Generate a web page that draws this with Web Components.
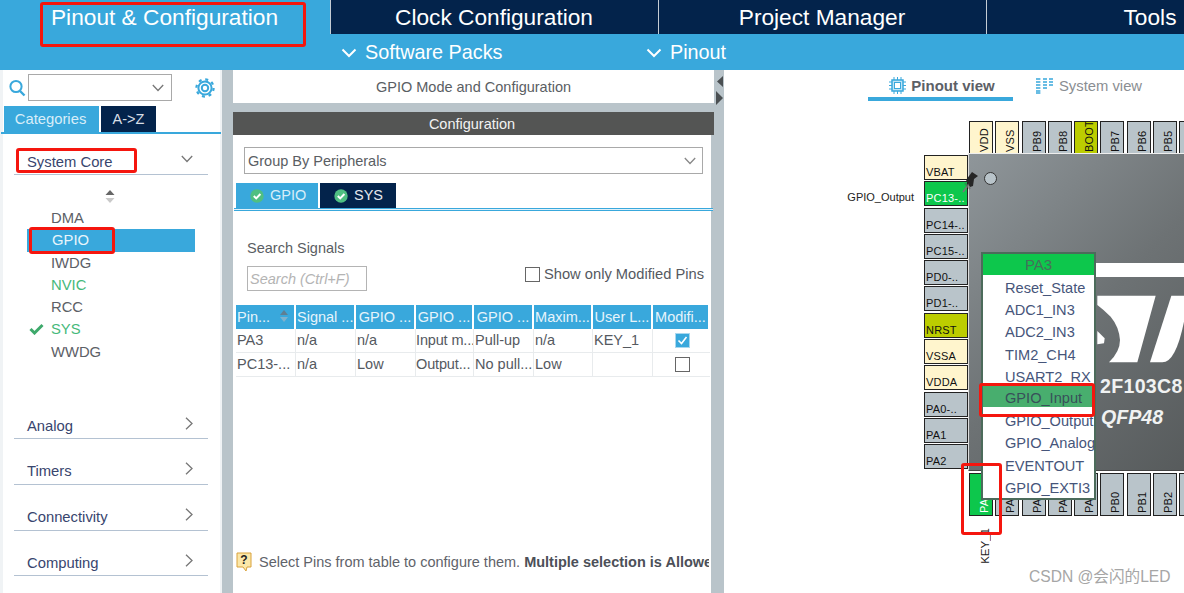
<!DOCTYPE html>
<html>
<head>
<meta charset="utf-8">
<title>Pinout & Configuration</title>
<style>
  html, body { margin: 0; height: 100%; overflow: hidden; background: #fff; }
  body { font-family: "Liberation Sans", Arial, sans-serif; color: #55595f; }
  .page { position: relative; width: 1184px; height: 593px; display: flex; flex-direction: column; overflow: hidden; }
  .work { display: flex; flex: 1; min-height: 0; }
</style>
</head>
<body>
<div class="page">
  <cube-topbar></cube-topbar>
  <div class="work">
    <cube-sidebar></cube-sidebar>
    <cube-gutter></cube-gutter>
    <cube-config></cube-config>
    <cube-gutter arrows></cube-gutter>
    <cube-chip></cube-chip>
  </div>
  <red-box style="left:40px;top:2px;width:266px;height:45px"></red-box>
  <red-box style="left:16px;top:148px;width:121px;height:25px"></red-box>
  <red-box style="left:29px;top:227px;width:86px;height:27px"></red-box>
  <red-box style="left:979px;top:383px;width:116px;height:34px"></red-box>
  <red-box style="left:961px;top:463px;width:41px;height:72px"></red-box>
  <water-mark>CSDN @会闪的LED</water-mark>
</div>

<script>
const CHEVRON_DOWN = '<svg width="16" height="10" viewBox="0 0 16 10"><path d="M1.5 1.5L8 8l6.5-6.5" fill="none" stroke="currentColor" stroke-width="2"/></svg>';

class CubeTopbar extends HTMLElement {
  constructor() {
    super();
    this.attachShadow({ mode: "open" }).innerHTML = `
    <style>
      :host { display: block; height: 70px; background: #39a8dc; color: #fff; overflow: hidden; flex: none; }
      .row { display: grid; grid-template-columns: 330px 328px 328px 328px; }
      .tab { height: 34px; line-height: 35px; text-align: center; font-size: 22.7px; background: #03234b; border-left: 1px solid #c4ccd4; box-sizing: border-box; padding-right: 1px; }
      .tab.on { background: #39a8dc; border-left: 0; }
      .subs { display: flex; height: 35px; padding-left: 341px; }
      .sub { display: flex; align-items: center; gap: 8px; font-size: 19.8px; padding-top: 2px; }
      .sub:first-child { width: 305px; }
      .sub svg { display: block; margin-top: 1px; }
    </style>
    <div class="row">
      <div class="tab on">Pinout &amp; Configuration</div>
      <div class="tab">Clock Configuration</div>
      <div class="tab">Project Manager</div>
      <div class="tab">Tools</div>
    </div>
    <div class="subs">
      <div class="sub">${CHEVRON_DOWN}<span>Software Packs</span></div>
      <div class="sub">${CHEVRON_DOWN}<span>Pinout</span></div>
    </div>`;
  }
}

class CubeGutter extends HTMLElement {
  constructor() {
    super();
    const arrows = this.hasAttribute("arrows");
    this.attachShadow({ mode: "open" }).innerHTML = `
    <style>
      :host { display: block; width: ${arrows ? 10 : 11}px; background: #b9c4ca; flex: none; }
      svg { display: block; margin: 6px 0 0 1px; }
    </style>
    ${arrows ? '<svg width="9" height="30" viewBox="0 0 9 30"><path d="M8 0v11L2 5.5z M1 15l7 7-7 7z" fill="#4a4f52"/></svg>' : ""}`;
  }
}

class CatRow extends HTMLElement {
  constructor() {
    super();
    const open = this.hasAttribute("open");
    this.attachShadow({ mode: "open" }).innerHTML = `
    <style>
      :host { display: flex; align-items: center; justify-content: space-between; box-sizing: border-box; height: 26px; margin: 0 12px 0 11px; padding: 0 15px 0 13px; border-bottom: 1px solid #b4c2d2; font-size: 14.8px; color: #38456e; }
      svg { display: block; color: #777; margin-top: -5px; }
    </style>
    <slot></slot>
    ${open
      ? '<svg width="12" height="8" viewBox="0 0 12 8"><path d="M.8 1L6 6.5 11.2 1" fill="none" stroke="currentColor" stroke-width="1.3"/></svg>'
      : '<svg width="8" height="13" viewBox="0 0 8 13"><path d="M1 .8L7 6.5 1 12.2" fill="none" stroke="currentColor" stroke-width="1.3"/></svg>'}`;
  }
}

class CubeSidebar extends HTMLElement {
  constructor() {
    super();
    this.attachShadow({ mode: "open" }).innerHTML = `
    <style>
      :host { display: block; width: 222px; flex: none; box-sizing: border-box; background: #fff; border-left: 3px solid #f0f3f5; border-right: 2px solid #f0f3f5; font-size: 14.5px; }
      .search { display: flex; align-items: center; height: 35px; padding-left: 6px; }
      .search .lens { display: block; }
      .combo { width: 144px; height: 27px; margin-left: 2px; box-sizing: border-box; border: 1px solid #a9a9a9; display: flex; align-items: center; justify-content: flex-end; padding-right: 7px; color: #777; }
      .gear { display: block; margin-left: 23px; }
      .tabs { display: flex; gap: 2px; height: 26px; margin: 1px -1px 0 -2px; padding-left: 3px; border-bottom: 2px solid #39a8dc; }
      .tabs div { line-height: 26px; text-align: center; }
      .cat { width: 95px; background: #39a8dc; color: #d8eef9; font-size: 14.8px; padding-right: 2px; box-sizing: border-box; }
      .az { width: 55px; background: #03234b; color: #d8dee6; }
      .first { margin-top: 15px; }
      .scroll { display: block; margin: 14px 0 0 101px; }
      ul { list-style: none; margin: 3px 0 0; padding: 0; }
      li { position: relative; height: 22.3px; line-height: 23px; padding-left: 48px; width: 120px; color: #5c6066; font-size: 14.8px; }
      li.sel { background: #39a8dc; color: #e8f5fb; margin-left: 24px; padding-left: 25px; width: 143px; }
      li.ok { color: #46b97a; }
      li svg { position: absolute; left: 26px; top: 5px; }
      .cats { margin-top: 50px; display: flex; flex-direction: column; gap: 19.8px; }
    </style>
    <div class="search">
      <svg class="lens" width="17" height="18" viewBox="0 0 17 18"><circle cx="7" cy="7.5" r="5.6" fill="none" stroke="#39a8dc" stroke-width="2"/><path d="M11 12l4.5 4.5" stroke="#39a8dc" stroke-width="2.4"/></svg>
      <div class="combo"><svg width="12" height="8" viewBox="0 0 12 8"><path d="M.8 1L6 6.5 11.2 1" fill="none" stroke="currentColor" stroke-width="1.3"/></svg></div>
      <svg class="gear" width="20" height="20" viewBox="0 0 20 20"><g fill="none" stroke="#39a8dc"><circle cx="10" cy="10" r="3.2" stroke-width="2"/><circle cx="10" cy="10" r="6.6" stroke-width="2"/><circle cx="10" cy="10" r="8.6" stroke-width="2.2" stroke-dasharray="3 3.75"/></g></svg>
    </div>
    <div class="tabs"><div class="cat">Categories</div><div class="az">A-&gt;Z</div></div>
    <cat-row class="first" open>System Core</cat-row>
    <svg class="scroll" width="12" height="15" viewBox="0 0 12 15"><path d="M6 1l4.5 5h-9z" fill="#666"/><path d="M6 14l4.5-5h-9z" fill="#c9c9c9"/></svg>
    <ul>
      <li>DMA</li>
      <li class="sel">GPIO</li>
      <li>IWDG</li>
      <li class="ok">NVIC</li>
      <li>RCC</li>
      <li class="ok"><svg width="15" height="12" viewBox="0 0 15 12"><path d="M1.5 6l4 4L13.5 2" fill="none" stroke="#3ea96b" stroke-width="3"/></svg>SYS</li>
      <li>WWDG</li>
    </ul>
    <div class="cats">
      <cat-row>Analog</cat-row>
      <cat-row>Timers</cat-row>
      <cat-row>Connectivity</cat-row>
      <cat-row>Computing</cat-row>
    </div>`;
  }
}

class PinTable extends HTMLElement {
  constructor() {
    super();
    const cols = "60px 60px 60px 58px 60px 59px 60px 57px";
    const head = ["Pin...", "Signal ...", "GPIO ...", "GPIO ...", "GPIO ...", "Maxim...", "User L...", "Modifi..."];
    const rows = [
      ["PA3", "n/a", "n/a", "Input m...", "Pull-up", "n/a", "KEY_1", true],
      ["PC13-...", "n/a", "Low", "Output...", "No pull...", "Low", "", false]
    ];
    const box = on => on
      ? '<svg width="15" height="15" viewBox="0 0 15 15"><rect x=".5" y=".5" width="14" height="14" fill="#39a8dc" stroke="#a9d8ef"/><path d="M3.5 7.5l3 3 5-6.5" fill="none" stroke="#fff" stroke-width="1.6"/></svg>'
      : '<svg width="15" height="15" viewBox="0 0 15 15"><rect x=".5" y=".5" width="14" height="14" fill="#fff" stroke="#666"/></svg>';
    const sortIcon = '<svg class="sort" width="10" height="14" viewBox="0 0 10 14"><path d="M5 1l4 5H1z" fill="#5f7f93"/><path d="M5 13l4-5H1z" fill="#7fb2cd"/></svg>';
    this.attachShadow({ mode: "open" }).innerHTML = `
    <style>
      :host { display: block; width: 474px; font-size: 14.5px; }
      .r { display: grid; grid-template-columns: ${cols}; }
      .h { height: 24px; }
      .h div { background: #39a8dc; color: #e6f4fb; margin-right: 2px; line-height: 25px; padding-left: 1px; white-space: nowrap; overflow: hidden; position: relative; }
      .h div.c { text-align: center; padding: 0; }
      .sort { position: absolute; right: 5px; top: 4px; }
      .b { height: 24px; border-bottom: 1px solid #e8ebed; box-sizing: border-box; }
      .b div { line-height: 22px; padding-left: 1px; border-right: 1px solid #e8ebed; white-space: nowrap; overflow: hidden; color: #55595f; }
      .b div:nth-child(4) { padding-left: 0; letter-spacing: -.15px; }
      .b div.m { display: flex; align-items: center; justify-content: center; border-right: 0; }
    </style>
    <div class="r h">${head.map((t, i) => `<div class="${i >= 2 ? "c" : ""}">${t}${i === 0 ? sortIcon : ""}</div>`).join("")}</div>
    ${rows.map(r => `<div class="r b">${r.map(v => typeof v === "boolean" ? `<div class="m">${box(v)}</div>` : `<div>${v}</div>`).join("")}</div>`).join("")}`;
  }
}

class CubeConfig extends HTMLElement {
  constructor() {
    super();
    const tick = '<svg width="14" height="14" viewBox="0 0 14 14"><circle cx="7" cy="7" r="6.7" fill="#4fbf82"/><path d="M3.8 7l2.4 2.4 4.2-4.4" fill="none" stroke="#fff" stroke-width="2"/></svg>';
    this.attachShadow({ mode: "open" }).innerHTML = `
    <style>
      :host { display: flex; flex-direction: column; width: 481px; flex: none; background: #b9c4ca; font-size: 14.5px; }
      .title { height: 33px; background: #fff; text-align: center; line-height: 34px; color: #5a5e63; flex: none; }
      .head { height: 23px; margin-top: 9px; background: #545554; color: #f2f2f2; text-align: center; line-height: 25px; flex: none; padding-right: 3px; }
      .body { flex: 1; background: #fff; margin-right: 3px; position: relative; }
      .select { display: flex; align-items: center; justify-content: space-between; box-sizing: border-box; height: 27px; width: 459px; margin: 12px 0 0 11px; border: 1px solid #a9a9a9; padding: 0 6px 0 3px; color: #5a5e63; }
      .select svg { color: #888; }
      .tabs { display: flex; gap: 2px; height: 25px; margin: 9px 0 0 3px; }
      .tabs div { display: flex; align-items: center; gap: 6px; padding-left: 14px; box-sizing: border-box; line-height: 25px; }
      .t1 { width: 82px; background: #39a8dc; color: #d8eef9; }
      .t2 { width: 76px; background: #03234b; color: #e3e8ee; }
      .rule { height: 1px; margin: 0 0 0 1px; width: 479px; border-top: 1px solid #39a8dc; border-bottom: 1px solid #39a8dc; background: #e0f1fa; }
      .search { display: flex; justify-content: space-between; margin: 28px 7px 0 14px; }
      .label { line-height: 18px; color: #5a5e63; }
      .input { width: 120px; height: 25px; box-sizing: border-box; border: 1px solid #b4b4b4; margin-top: 9px; line-height: 24px; padding-left: 2px; color: #b4b4b4; font-style: italic; }
      .only { display: flex; align-items: center; gap: 4px; margin-top: 26px; height: 18px; color: #55595f; font-size: 14.7px; }
      pin-table { margin: 14px 0 0 3px; }
      .hint { position: absolute; left: 3px; right: 2px; top: 417px; display: flex; align-items: center; gap: 7px; white-space: nowrap; overflow: hidden; color: #5f636a; }
      .hint b { color: #4c5058; }
    </style>
    <div class="title">GPIO Mode and Configuration</div>
    <div class="head">Configuration</div>
    <div class="body">
      <div class="select"><span>Group By Peripherals</span><svg style="display:block" width="12" height="8" viewBox="0 0 12 8"><path d="M.8 1L6 6.5 11.2 1" fill="none" stroke="currentColor" stroke-width="1.3"/></svg></div>
      <div class="tabs"><div class="t1">${tick}<span>GPIO</span></div><div class="t2">${tick}<span>SYS</span></div></div>
      <div class="rule"></div>
      <div class="search">
        <div>
          <div class="label">Search Signals</div>
          <div class="input">Search (Ctrl+F)</div>
        </div>
        <div class="only"><svg style="display:block" width="15" height="15" viewBox="0 0 15 15"><rect x=".5" y=".5" width="14" height="14" fill="#fff" stroke="#666"/></svg><span>Show only Modified Pins</span></div>
      </div>
      <pin-table></pin-table>
      <div class="hint">
        <svg style="flex:none;display:block" width="16" height="20" viewBox="0 0 16 20"><path d="M1 1h14v14h-4l-1 4-3-4H1z" fill="#fbe7a8" stroke="#d9a23c"/><text x="8" y="12" font-family="Liberation Sans" font-weight="700" font-size="12" text-anchor="middle" fill="#222">?</text></svg>
        <span>Select Pins from table to configure them. <b>Multiple selection is Allowed</b></span>
      </div>
    </div>`;
  }
}

class ChipPin extends HTMLElement {
  constructor() {
    super();
    this.attachShadow({ mode: "open" }).innerHTML = `
    <style>
      :host { display: block; box-sizing: border-box; background: #b9c4ca; border: 1px solid #222; color: #111; font-size: 11px; letter-spacing: .2px; overflow: hidden; white-space: nowrap; flex: none; }
      :host([kind="power"]) { background: #fff5cd; }
      :host([kind="ctrl"]) { background: #bccd00; }
      :host([kind="on"]) { background: #0dc74c; color: #fff; }
      :host([side="left"]) { width: 44px; height: 25px; line-height: 33px; padding-left: 1px; }
      :host([side="top"]), :host([side="bottom"]) { width: 24px; height: 100%; writing-mode: vertical-rl; transform: rotate(180deg); line-height: 29px; }
      :host([side="top"]) { border-top: 0; padding-top: 1px; text-align: left; }
      :host([side="bottom"]) { padding-top: 2px; text-align: left; }
    </style>
    <slot></slot>`;
  }
}

class CubeChip extends HTMLElement {
  constructor() {
    super();
    const top = [["VDD", "power"], ["VSS", "power"], ["PB9"], ["PB8"], ["BOOT", "ctrl"], ["PB7"], ["PB6"], ["PB5"], [""]];
    const left = [["VBAT", "power"], ["PC13-..", "on"], ["PC14-.."], ["PC15-.."], ["PD0-.."], ["PD1-.."], ["NRST", "ctrl"], ["VSSA", "power"], ["VDDA", "power"], ["PA0-.."], ["PA1"], ["PA2"]];
    const bottom = [["PA", "on"], ["PA"], ["PA"], ["PA"], ["PA"], ["PB0"], ["PB1"], ["PB2"], [""]];
    const menu = ["Reset_State", "ADC1_IN3", "ADC2_IN3", "TIM2_CH4", "USART2_RX", "GPIO_Input", "GPIO_Output", "GPIO_Analog", "EVENTOUT", "GPIO_EXTI3"];
    const pins = (list, side) => list.map(([t, k]) => `<chip-pin side="${side}"${k ? ` kind="${k}"` : ""}>${t}</chip-pin>`).join("");
    this.attachShadow({ mode: "open" }).innerHTML = `
    <style>
      :host { display: block; flex: 1; min-width: 0; position: relative; overflow: hidden; background: #fff; font-size: 14.8px; }
      .views { height: 32px; display: flex; color: #8a8e92; }
      .view { display: flex; align-items: center; gap: 5px; box-sizing: border-box; height: 31px; padding-top: 3px; }
      .v1 { width: 145px; margin-left: 144px; justify-content: center; border-bottom: 4px solid #39a8dc; color: #5c6066; font-weight: 700; font-size: 15px; padding-left: 3px; }
      .v2 { margin-left: 23px; padding-top: 1px; }
      .board { display: grid; grid-template-columns: 44px 240px; grid-template-rows: 32px 318px 45px; margin: 19px 0 0 200px; }
      .toprow, .botrow { display: flex; gap: 2.3px; grid-column: 2; padding-left: 1px; }
      .botrow { margin-top: 2px; height: 43px; }
      .leftcol { display: flex; flex-direction: column; gap: 1.3px; padding-top: 2px; }
      .die { position: relative; overflow: hidden; border: 1px solid #444; border-right: 0; border-top-color: #eee; border-left-color: #ddd; background: linear-gradient(135deg, #8f969a 0%, #6d7274 50%, #55595a 100%); }
      .logo { position: absolute; left: 125px; top: 131px; display: block; }
      .dot { position: absolute; left: 15px; top: 18px; width: 13px; height: 13px; border-radius: 50%; background: #b9c4ca; border: 1px solid #333; box-sizing: border-box; }
      .name, .pack { position: absolute; color: #f0f2f2; font-weight: 700; white-space: nowrap; font-size: 19.6px; }
      .name { left: 131px; top: 221px; letter-spacing: .3px; }
      .pack { left: 132px; top: 252px; font-style: italic; }
      .stripe { position: absolute; left: 127px; right: 0; top: 109px; height: 14px; background: #fff; }
      .pin-mark { position: absolute; left: 238px; top: 101px; display: block; }
      .out { position: absolute; right: 270px; top: 121px; font-size: 11px; color: #222; }
      .key { position: absolute; left: 254px; top: 458px; font-size: 11.5px; color: #222; writing-mode: vertical-rl; transform: rotate(180deg); line-height: 14px; }
      .menu { position: absolute; left: 257px; top: 182px; width: 115px; height: 248px; box-sizing: border-box; background: #fff; border: 2px solid #4c6b5b; color: #46557a; font-size: 14.6px; }
      .menu h4 { margin: 0; height: 21px; line-height: 22px; background: #0dc74c; text-align: center; font-weight: 400; font-size: 15px; color: #45705a; }
      .menu div { height: 22.2px; line-height: 26px; padding-left: 22px; white-space: nowrap; overflow: hidden; }
      .menu div.on { background: #48ae6e; height: 21px; line-height: 24px; color: #38505a; margin-bottom: 1.2px; }
    </style>
    <div class="views">
      <div class="view v1"><svg style="display:block" width="17" height="17" viewBox="0 0 17 17"><rect x="3" y="3" width="11" height="11" fill="#bfe3f5" stroke="#39a8dc" stroke-width="1.5"/><rect x="5.5" y="5.5" width="6" height="6" fill="#fff" stroke="#39a8dc"/><path d="M5 0v3M8.5 0v3M12 0v3M5 14v3M8.5 14v3M12 14v3M0 5h3M0 8.5h3M0 12h3M14 5h3M14 8.5h3M14 12h3" stroke="#39a8dc"/></svg><span>Pinout view</span></div>
      <div class="view v2"><svg style="display:block" width="18" height="16" viewBox="0 0 18 16"><path d="M0 1h5M0 4h5M0 7h5M0 10h5M0 13h5M0 15h5M7 1h4M7 4h4M7 7h4M7 10h4M13 1h4M13 4h4M13 7h4" stroke="#39a8dc" stroke-width="1.6" stroke-dasharray="4 .6"/></svg><span>System view</span></div>
    </div>
    <div class="board">
      <div></div>
      <div class="toprow">${pins(top, "top")}</div>
      <div class="leftcol">${pins(left, "left")}</div>
      <div class="die">
        <div class="stripe"></div>
        <svg class="logo" width="90" height="90" viewBox="0 0 270 270"><path d="M10 32H185L130 232H45Q78 200 78 165Q75 125 50 95Q30 75 10 60z" fill="#fff"/><path d="M10 138L32 160 30 175 10 178z" fill="#fff"/><path d="M232 32H270V110Q245 232 205 232H168z" fill="#fff"/></svg>
        <div class="dot"></div>
        <div class="name">2F103C8</div>
        <div class="pack">QFP48</div>
      </div>
      <div></div>
      <div class="botrow">${pins(bottom, "bottom")}</div>
    </div>
    <div class="out">GPIO_Output</div>
    <svg class="pin-mark" width="18" height="23" viewBox="0 0 18 23"><path d="M1 21l6-8" stroke="#777" stroke-width="1.6"/><path d="M4 9l6-8 6 4-4 3-1 7-3 1z" fill="#262626"/><path d="M3 12l5 6" stroke="#555" stroke-width="2" opacity=".5"/></svg>
    <div class="key">KEY_1</div>
    <div class="menu">
      <h4>PA3</h4>
      ${menu.map(m => `<div${m === "GPIO_Input" ? ' class="on"' : ""}>${m}</div>`).join("")}
    </div>`;
  }
}

class RedBox extends HTMLElement {
  constructor() {
    super();
    this.attachShadow({ mode: "open" }).innerHTML = `
    <style>
      :host { position: absolute; display: block; box-sizing: border-box; border: 3px solid #f5160e; border-radius: 3px; pointer-events: none; }
    </style>`;
  }
}

class WaterMark extends HTMLElement {
  constructor() {
    super();
    this.attachShadow({ mode: "open" }).innerHTML = `
    <style>
      :host { position: absolute; left: 1029px; top: 564px; font-size: 15.6px; color: #a6a6a6; font-family: "Liberation Sans", "Noto Sans CJK SC", sans-serif; white-space: nowrap; }
    </style>
    <slot></slot>`;
  }
}

customElements.define("cube-topbar", CubeTopbar);
customElements.define("cube-gutter", CubeGutter);
customElements.define("cat-row", CatRow);
customElements.define("cube-sidebar", CubeSidebar);
customElements.define("pin-table", PinTable);
customElements.define("cube-config", CubeConfig);
customElements.define("chip-pin", ChipPin);
customElements.define("cube-chip", CubeChip);
customElements.define("red-box", RedBox);
customElements.define("water-mark", WaterMark);
</script>
</body>
</html>
